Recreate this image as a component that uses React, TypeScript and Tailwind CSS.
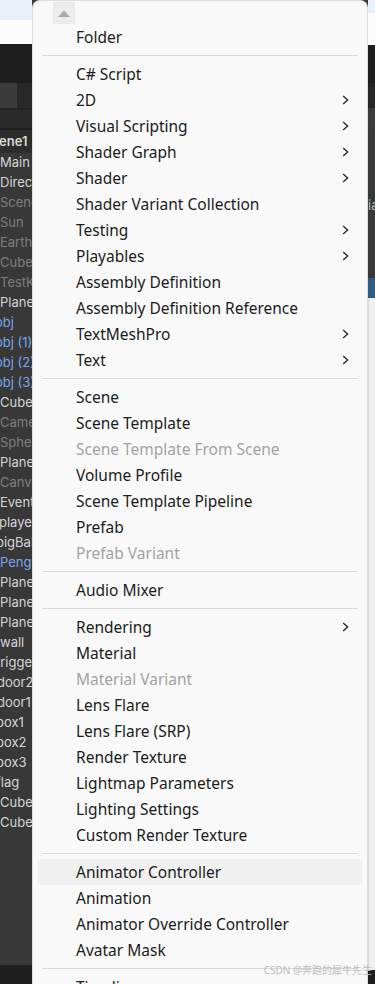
import React from 'react';

type Item = { label: string; sub?: boolean; disabled?: boolean; hover?: boolean } | 'sep';

const MENU: Item[] = [
  { label: 'Folder' },
  'sep',
  { label: 'C# Script' },
  { label: '2D', sub: true },
  { label: 'Visual Scripting', sub: true },
  { label: 'Shader Graph', sub: true },
  { label: 'Shader', sub: true },
  { label: 'Shader Variant Collection' },
  { label: 'Testing', sub: true },
  { label: 'Playables', sub: true },
  { label: 'Assembly Definition' },
  { label: 'Assembly Definition Reference' },
  { label: 'TextMeshPro', sub: true },
  { label: 'Text', sub: true },
  'sep',
  { label: 'Scene' },
  { label: 'Scene Template' },
  { label: 'Scene Template From Scene', disabled: true },
  { label: 'Volume Profile' },
  { label: 'Scene Template Pipeline' },
  { label: 'Prefab' },
  { label: 'Prefab Variant', disabled: true },
  'sep',
  { label: 'Audio Mixer' },
  'sep',
  { label: 'Rendering', sub: true },
  { label: 'Material' },
  { label: 'Material Variant', disabled: true },
  { label: 'Lens Flare' },
  { label: 'Lens Flare (SRP)' },
  { label: 'Render Texture' },
  { label: 'Lightmap Parameters' },
  { label: 'Lighting Settings' },
  { label: 'Custom Render Texture' },
  'sep',
  { label: 'Animator Controller', hover: true },
  { label: 'Animation' },
  { label: 'Animator Override Controller' },
  { label: 'Avatar Mask' },
  'sep',
  { label: 'Timeline' },
];

// hierarchy names, c = colour kind, o = left offset
const HIER: { t: string; c: 'w' | 'g' | 'b'; o: string }[] = [
  { t: 'Main Camera', c: 'w', o: 'ml-0' },
  { t: 'Directional', c: 'w', o: 'ml-0' },
  { t: 'Scene', c: 'g', o: 'ml-0' },
  { t: 'Sun', c: 'g', o: 'ml-0' },
  { t: 'Earth', c: 'g', o: 'ml-0' },
  { t: 'Cube', c: 'g', o: 'ml-0' },
  { t: 'TestKit', c: 'g', o: 'ml-0' },
  { t: 'Plane', c: 'w', o: 'ml-0' },
  { t: 'obj', c: 'b', o: '-ml-[5px]' },
  { t: 'obj (1)', c: 'b', o: '-ml-[5px]' },
  { t: 'obj (2)', c: 'b', o: '-ml-[5px]' },
  { t: 'obj (3)', c: 'b', o: '-ml-[5px]' },
  { t: 'Cube', c: 'w', o: 'ml-0' },
  { t: 'Camera', c: 'g', o: 'ml-0' },
  { t: 'Sphere', c: 'g', o: 'ml-0' },
  { t: 'Plane', c: 'w', o: 'ml-0' },
  { t: 'Canvas', c: 'g', o: 'ml-0' },
  { t: 'EventSystem', c: 'w', o: 'ml-0' },
  { t: 'player', c: 'w', o: '-ml-[1px]' },
  { t: 'bigBall', c: 'w', o: '-ml-[4px]' },
  { t: 'Penguin', c: 'b', o: 'ml-0' },
  { t: 'Plane', c: 'w', o: 'ml-0' },
  { t: 'Plane', c: 'w', o: 'ml-0' },
  { t: 'Plane', c: 'w', o: 'ml-0' },
  { t: 'wall', c: 'w', o: 'ml-0' },
  { t: 'trigger', c: 'w', o: '-ml-[4px]' },
  { t: 'door2', c: 'w', o: '-ml-[3px]' },
  { t: 'door1', c: 'w', o: '-ml-[3px]' },
  { t: 'box1', c: 'w', o: '-ml-[4px]' },
  { t: 'box2', c: 'w', o: '-ml-[4px]' },
  { t: 'box3', c: 'w', o: '-ml-[4px]' },
  { t: 'flag', c: 'w', o: '-ml-[4px]' },
  { t: 'Cube', c: 'w', o: 'ml-0' },
  { t: 'Cube', c: 'w', o: 'ml-0' },
];

const colorOf = { w: 'text-[#d4d4d4]', g: 'text-[#7e7e7e]', b: 'text-[#7aa6ea]' };

function Chevron() {
  return (
    <svg width="7" height="10" viewBox="0 0 7 10" className="shrink-0 -mt-[2px]">
      <polyline points="1.2,1 5.6,5 1.2,9" fill="none" stroke="#2b2b2b" strokeWidth="1.4" />
    </svg>
  );
}

function LeftStrip() {
  return (
    <div className="w-[32px] shrink-0 flex flex-col overflow-hidden" style={{ fontFamily: 'Inter, "Noto Sans", sans-serif' }}>
      <div className="h-[20px] bg-[#e8f0f9]" />
      <div className="h-[24px] bg-[#fcfcfc]" />
      <div className="h-[39px] bg-[#1e1e1e]" />
      <div className="h-[25px] flex">
        <div className="w-[17px] bg-[#3a3a3a]" />
        <div className="flex-1 bg-[#282828]" />
      </div>
      <div className="h-[2px] bg-[#232323]" />
      <div className="h-[18px] bg-[#2a2a2a]" />
      <div className="h-[2px] bg-[#1f1f1f]" />
      <div className="h-[835px] bg-[#383838] flex flex-col">
        <div className="h-[23px] bg-[#2d2d2d] flex items-center whitespace-nowrap text-[13px] font-semibold text-[#d8d8d8] -ml-[17px]">
          Scene1
        </div>
        {HIER.map((h, i) => (
          <div key={i} className={`h-[20px] flex items-center whitespace-nowrap text-[13px] ${colorOf[h.c]} ${h.o}`}>
            {h.t}
          </div>
        ))}
      </div>
      <div className="flex-1 bg-[#1e1e1e]" />
    </div>
  );
}

function RightStrip() {
  return (
    <div className="w-[7px] shrink-0 flex flex-col overflow-hidden">
      <div className="h-[13px] bg-[#e8f0f9]" />
      <div className="h-[32px] bg-[#fcfcfc]" />
      <div className="h-[38px] bg-[#1e1e1e]" />
      <div className="h-[25px] bg-[#262626]" />
      <div className="h-[25px] bg-[#3b3b3b]" />
      <div className="h-[145px] bg-[#383838] flex flex-col">
        <div className="h-[62px]" />
        <div className="text-[13px] text-[#bdbdbd] whitespace-nowrap leading-[20px]" style={{ fontFamily: 'Inter, sans-serif' }}>ial</div>
      </div>
      <div className="h-[20px] bg-[#2c5b86]" />
      <div className="h-[672px] bg-[#f0f0f0] border-l border-[#dadada]" />
      <div className="flex-1 bg-[#1e1e1e]" />
    </div>
  );
}

function Menu() {
  return (
    <div
      className="w-[336px] shrink-0 bg-[#f9f9f9] border-x border-t border-[#dcdcdc] rounded-t-[8px] flex flex-col overflow-hidden"
      style={{ fontFamily: '"Noto Sans", "Open Sans", sans-serif' }}
    >
      <div className="h-[23px] pt-[1px] pl-[20px]">
        <div className="w-[22px] h-[22px] bg-[#ececec] flex items-center justify-center">
          <svg width="12" height="7" viewBox="0 0 12 7">
            <polygon points="0,7 6,0.5 12,7" fill="#a8a8a8" />
          </svg>
        </div>
      </div>
      <div className="flex flex-col px-[5px]">
        {MENU.map((it, i) =>
          it === 'sep' ? (
            <div key={i} className="h-[11px] flex items-center">
              <div className="h-px w-[316px] bg-[#d9d9d9] ml-[4px]" />
            </div>
          ) : (
            <div
              key={i}
              className={`h-[26px] shrink-0 flex items-center pt-[2px] pl-[38px] pr-[13px] rounded-[4px] text-[15.5px] ${
                it.hover ? 'bg-[#f0f0f0]' : ''
              } ${it.disabled ? 'text-[#a3a3a3]' : 'text-[#1b1b1b]'}`}
            >
              <span className="flex-1 whitespace-nowrap">{it.label}</span>
              {it.sub && <Chevron />}
            </div>
          )
        )}
      </div>
    </div>
  );
}

export default function App() {
  return (
    <div className="relative w-[375px] h-[984px] overflow-hidden flex bg-[#383838]">
      <LeftStrip />
      <Menu />
      <RightStrip />
      <div
        className="absolute right-[3px] bottom-[6px] text-[10px] text-[#bcbcbc] whitespace-nowrap"
        style={{ fontFamily: '"Noto Sans", "Noto Sans CJK SC", sans-serif' }}
      >
        CSDN @奔跑的犀牛先生
      </div>
    </div>
  );
}
